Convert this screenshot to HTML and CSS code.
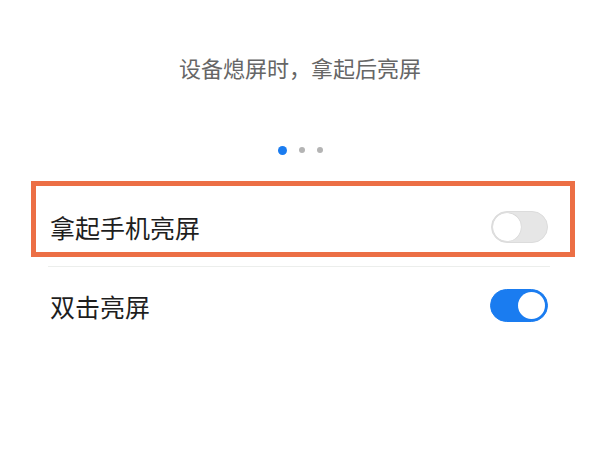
FILE: index.html
```html
<!DOCTYPE html>
<html lang="zh-CN">

<head>
  <meta charset="UTF-8" />
  <meta name="viewport" content="width=device-width, initial-scale=1.0" />
  <title>亮屏设置</title>
  <link rel="stylesheet" href="styles.css">
</head>

<body>
  <div class="page">
    <!-- Caption under the preview -->
    <p class="caption">设备熄屏时，拿起后亮屏</p>

    <!-- Pager dots -->
    <div class="dots">
      <span class="dot active"></span>
      <span class="dot"></span>
      <span class="dot"></span>
    </div>

    <!-- Settings list -->
    <div class="settings">
      <div class="row row-highlight">
        <span class="row-label">拿起手机亮屏</span>
        <span class="switch"><span class="knob"></span></span>
      </div>
      <div class="divider"></div>
      <div class="row row-plain">
        <span class="row-label">双击亮屏</span>
        <span class="switch on"><span class="knob"></span></span>
      </div>
    </div>
  </div>
</body>

</html>
```

FILE: styles.css
```css
/* Reset default styles */
* {
  margin: 0;
  padding: 0;
  box-sizing: border-box;
  font-family: "Noto Sans CJK SC", "Noto Sans", sans-serif;
}

:root {
  --text-primary: #1e1e1e;
  --text-secondary: #666666;
  --accent: #1a7cf0;
  --highlight: #ec6f45;
  --switch-off: #e6e6e6;
  --divider: #eceeec;
}

body {
  background-color: #ffffff;
  width: 600px;
  height: 450px;
  overflow: hidden;
}

.page {
  display: flex;
  flex-direction: column;
}

/* Caption */
.caption {
  margin-top: 53px;
  font-size: 22px;
  line-height: 28px;
  text-align: center;
  color: var(--text-secondary);
}

/* Pager dots */
.dots {
  margin-top: 65px;
  height: 8px;
  display: flex;
  justify-content: center;
  align-items: center;
  gap: 12px;
}

.dot {
  width: 6px;
  height: 6px;
  border-radius: 50%;
  background-color: #b4b4b4;
}

.dot.active {
  width: 9px;
  height: 9px;
  background-color: var(--accent);
}

/* Settings list */
.settings {
  margin: 27px 25px 0 31px;
}

.row {
  display: flex;
  justify-content: space-between;
  align-items: center;
}

.row-label {
  font-size: 25px;
  line-height: 32px;
  color: var(--text-primary);
}

.row-highlight {
  border: 5px solid var(--highlight);
  padding: 25px 22px 9px 14px;
}

.row-plain {
  padding: 22px 27px 0 19px;
}

.divider {
  height: 1px;
  margin: 9px 25px 0 17px;
  background-color: var(--divider);
}

/* Toggle switch */
.switch {
  width: 57px;
  height: 32px;
  border-radius: 16px;
  background-color: var(--switch-off);
  border: 1px solid #dcdcdc;
  display: flex;
  align-items: center;
  padding: 1px;
}

.switch .knob {
  width: 28px;
  height: 28px;
  border-radius: 50%;
  background-color: #ffffff;
  box-shadow: 0 0 1px rgba(0, 0, 0, 0.25);
}

.switch.on {
  width: 58px;
  height: 33px;
  border-radius: 17px;
  background-color: var(--accent);
  border-color: var(--accent);
  justify-content: flex-end;
  padding: 2px;
}

.switch.on .knob {
  width: 27px;
  height: 27px;
  box-shadow: none;
}
```
